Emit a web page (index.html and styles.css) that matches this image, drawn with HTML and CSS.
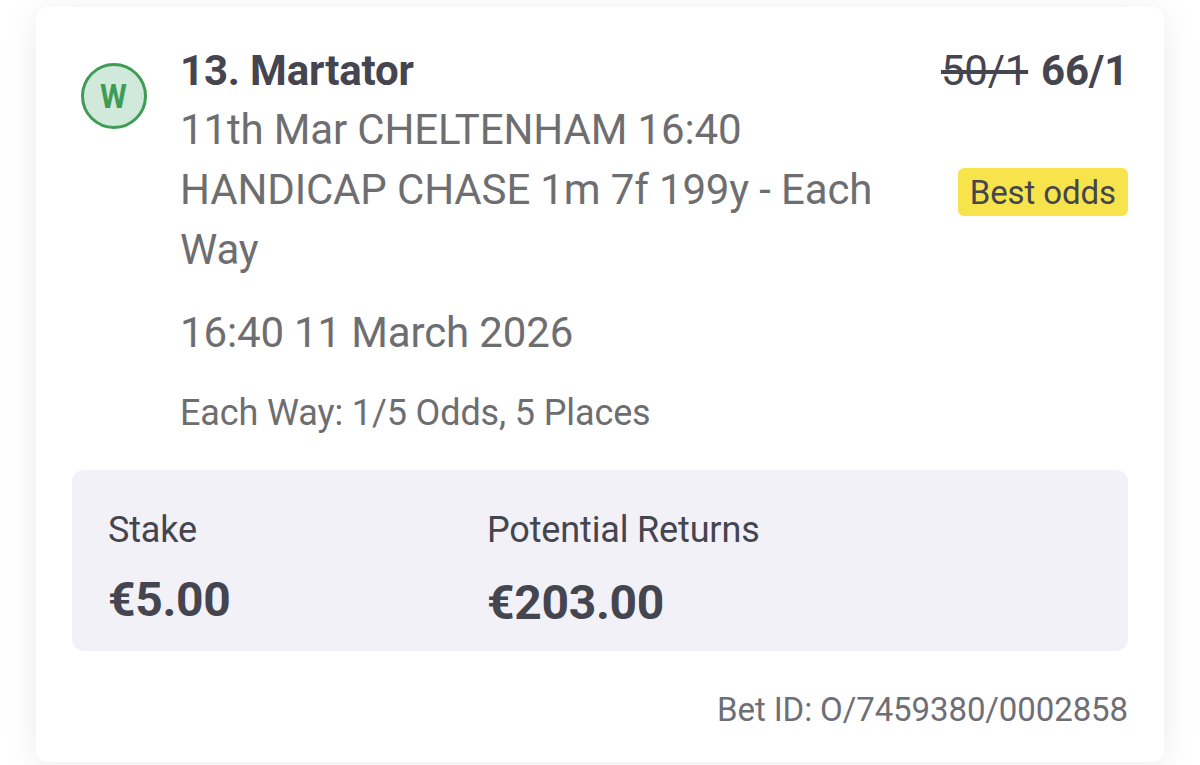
FILE: index.html
```html
<!DOCTYPE html>
<html lang="en">
<head>
    <meta charset="UTF-8">
    <meta name="viewport" content="width=device-width, initial-scale=1.0">
    <title>Bet Slip</title>
    <link rel="stylesheet" href="styles.css">
</head>
<body>
    <div class="card">
        <div class="bet">
            <div class="status"><span>W</span></div>
            <div class="details">
                <h1 class="runner">13. Martator</h1>
                <p class="event">11th Mar CHELTENHAM 16:40<br>HANDICAP CHASE 1m 7f 199y - Each<br>Way</p>
                <p class="time">16:40 11 March 2026</p>
                <p class="terms">Each Way: 1/5 Odds, 5 Places</p>
            </div>
            <div class="odds">
                <div class="price"><s class="old-price">50/1</s><strong class="new-price">66/1</strong></div>
                <span class="best-odds">Best odds</span>
            </div>
        </div>
        <div class="summary">
            <div class="stake">
                <p class="label">Stake</p>
                <p class="amount">€5.00</p>
            </div>
            <div class="returns">
                <p class="label">Potential Returns</p>
                <p class="amount">€203.00</p>
            </div>
        </div>
        <p class="bet-id">Bet ID: O/7459380/0002858</p>
    </div>
</body>
</html>
```

FILE: styles.css
```css
* {
    box-sizing: border-box;
}

body {
    font-family: Roboto, sans-serif;
    background-color: #fff;
    margin: 0;
    padding: 7px 36px 0;
    height: 765px;
    overflow: hidden;
}

h1, p {
    margin: 0;
}

.card {
    background-color: #fff;
    width: 1128px;
    height: 755px;
    padding: 34px 36px 0;
    border-radius: 12px;
    box-shadow: 0 6px 36px rgba(0, 0, 0, 0.08);
}

.bet {
    display: flex;
    height: 429px;
}

.status {
    display: flex;
    align-items: center;
    justify-content: center;
    width: 66px;
    height: 66px;
    margin: 22px 33.5px 0 8.5px;
    border: 3px solid #3f9c55;
    border-radius: 50%;
    background-color: #d0e9db;
    color: #3f9c55;
    font-size: 33px;
    font-weight: 700;
}

.status span {
    transform: scaleX(0.93);
}

.details {
    flex: 1;
    white-space: nowrap;
    color: #6e6e71;
}

.runner {
    color: #45454f;
    font-size: 42px;
    line-height: 60px;
    letter-spacing: -0.18px;
}

.event, .time {
    font-size: 42px;
    line-height: 60px;
    letter-spacing: -0.15px;
}

.event {
    margin-top: -1px;
}

.time {
    margin-top: 23px;
}

.terms {
    margin-top: 23px;
    font-size: 36px;
    line-height: 54px;
    letter-spacing: -0.12px;
}

.odds {
    display: flex;
    flex-direction: column;
    align-items: flex-end;
    color: #45454f;
}

.price {
    display: flex;
    gap: 13px;
    font-size: 42px;
    line-height: 60px;
    letter-spacing: -0.25px;
}

.best-odds {
    height: 48px;
    margin-top: 67px;
    padding: 1px 12px 0;
    border-radius: 6px;
    background-color: #f7e44c;
    font-size: 33px;
    line-height: 48px;
    letter-spacing: -0.1px;
}

.summary {
    display: flex;
    height: 181px;
    padding: 35px 36px 0;
    border-radius: 12px;
    background-color: #f2f1f8;
    color: #45454f;
}

.stake {
    width: 379px;
}

.label {
    font-size: 36px;
    line-height: 50px;
    letter-spacing: -0.15px;
}

.amount {
    margin-top: 15px;
    font-size: 48px;
    font-weight: 700;
    line-height: 60px;
    letter-spacing: -0.3px;
}

.returns .amount {
    margin-top: 18px;
}

.bet-id {
    margin-top: 35px;
    color: #6e6e76;
    font-size: 33px;
    line-height: 48px;
    letter-spacing: -0.1px;
    text-align: right;
}
```
